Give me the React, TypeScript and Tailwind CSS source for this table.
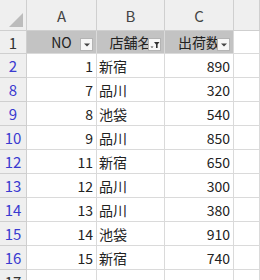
import React from 'react';

const rows = [
  { n: 2, no: 1, shop: '新宿', qty: 890 },
  { n: 8, no: 7, shop: '品川', qty: 320 },
  { n: 9, no: 8, shop: '池袋', qty: 540 },
  { n: 10, no: 9, shop: '品川', qty: 850 },
  { n: 12, no: 11, shop: '新宿', qty: 650 },
  { n: 13, no: 12, shop: '品川', qty: 300 },
  { n: 14, no: 13, shop: '品川', qty: 380 },
  { n: 15, no: 14, shop: '池袋', qty: 910 },
  { n: 16, no: 15, shop: '新宿', qty: 740 },
];

function FilterButton({ filtered = false }: { filtered?: boolean }) {
  return (
    <div className="absolute right-[3px] top-[7px] w-[13px] h-[13px] bg-[#f7f7f7] border border-[#b4b4b4] flex items-center justify-center">
      {filtered ? (
        <svg width="10" height="8" viewBox="0 0 10 8">
          <path d="M0.5 5.5h3l-1.5 1.5z" fill="#444" />
          <path d="M4 1h5.5L7.6 3.6V7H6V3.6z" fill="#333" />
        </svg>
      ) : (
        <svg width="6" height="4" viewBox="0 0 6 4">
          <path d="M0 0.5h6L3 3.5z" fill="#444" />
        </svg>
      )}
    </div>
  );
}

export default function App() {
  const font = { fontFamily: '"Noto Sans CJK JP", "Noto Sans", sans-serif' };
  const hdr = 'bg-[#efefef] border-r border-b border-[#cfcfcf] text-[#444] text-[15px] flex justify-center';
  const cell = 'border-r border-b border-[#dadada] text-[14px] text-[#222] flex items-center';

  return (
    <div className="w-[260px] h-[280px] overflow-hidden bg-white leading-none" style={font}>
      {/* column letters */}
      <div className="flex h-[31px]">
        <div className="w-[27px] shrink-0 bg-[#efefef] border-r border-b border-[#cfcfcf] relative">
          <svg className="absolute right-[3px] bottom-[3px]" width="14" height="14" viewBox="0 0 14 14">
            <path d="M14 0V14H0z" fill="#bcbcbc" />
          </svg>
        </div>
        {['A', 'B', 'C'].map((c, i) => (
          <div key={c} className={`${hdr} items-end pb-[7px] shrink-0 ${i === 0 ? 'w-[70px]' : i === 1 ? 'w-[68px]' : 'w-[69px]'}`}>
            {c}
          </div>
        ))}
        <div className={`${hdr} flex-1`} />
      </div>

      {/* table header row */}
      <div className="flex h-[23px]">
        <div className="w-[27px] shrink-0 bg-[#efefef] border-r border-b border-[#cfcfcf] text-[15px] text-[#333] flex items-center justify-center">1</div>
        <div className={`${cell} bg-[#c3c3c3] w-[70px] shrink-0 justify-center relative`}>
          <span>NO</span>
          <FilterButton />
        </div>
        <div className={`${cell} bg-[#c3c3c3] w-[68px] shrink-0 justify-center relative`}>
          <span>店舗名</span>
          <FilterButton filtered />
        </div>
        <div className={`${cell} bg-[#c3c3c3] w-[69px] shrink-0 justify-center relative`}>
          <span>出荷数</span>
          <FilterButton />
        </div>
        <div className={`${cell} flex-1`} />
      </div>

      {rows.map((r) => (
        <div key={r.n} className="flex h-[24px]">
          <div className="w-[27px] shrink-0 bg-[#efefef] border-r border-b border-[#cfcfcf] text-[15px] text-[#3a3ad0] flex items-center justify-center">
            {r.n}
          </div>
          <div className={`${cell} w-[70px] shrink-0 justify-end pr-[3px]`}>{r.no}</div>
          <div className={`${cell} w-[68px] shrink-0 pl-[2px]`}>{r.shop}</div>
          <div className={`${cell} w-[69px] shrink-0 justify-end pr-[3px]`}>{r.qty}</div>
          <div className={`${cell} flex-1`} />
        </div>
      ))}

      <div className="flex h-[24px]">
        <div className="w-[27px] shrink-0 bg-[#efefef] border-r border-b border-[#cfcfcf] text-[15px] text-[#333] flex items-center justify-center">17</div>
        <div className={`${cell} w-[70px] shrink-0`} />
        <div className={`${cell} w-[68px] shrink-0`} />
        <div className={`${cell} w-[69px] shrink-0`} />
        <div className={`${cell} flex-1`} />
      </div>
    </div>
  );
}
